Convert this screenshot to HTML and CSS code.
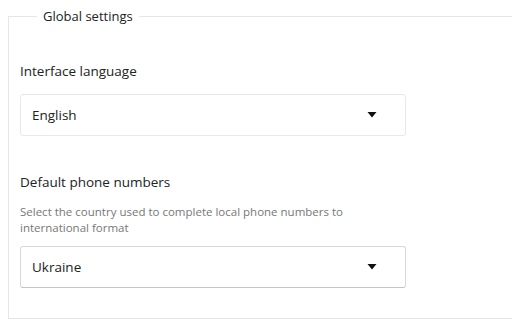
FILE: index.html
```html
<!DOCTYPE html>
<html>
<head>
<meta charset="utf-8">
<link rel="stylesheet" href="styles.css">
</head>
<body>
<fieldset class="group">
  <legend class="group-title">Global settings</legend>
  <div class="field">
    <div class="label">Interface language</div>
    <div class="select">
      <span class="value">English</span>
      <svg class="caret" width="10" height="6" viewBox="0 0 10 6"><path d="M0.5 0H9.5L5 5.5Z" fill="#111"/></svg>
    </div>
  </div>
  <div class="field second">
    <div class="label">Default phone numbers</div>
    <div class="hint">Select the country used to complete local phone numbers to international format</div>
    <div class="select dark">
      <span class="value">Ukraine</span>
      <svg class="caret" width="10" height="6" viewBox="0 0 10 6"><path d="M0.5 0H9.5L5 5.5Z" fill="#111"/></svg>
    </div>
  </div>
</fieldset>
</body>
</html>
```
FILE: styles.css
```css
html, body {
  margin: 0;
  padding: 0;
  background: #fff;
  overflow: hidden;
  width: 512px;
  height: 320px;
}
body {
  font-family: "Open Sans", "Noto Sans", sans-serif;
  color: #222;
}
.group {
  margin: 8px 0 0 8px;
  width: 504px;
  height: 311px;
  box-sizing: border-box;
  border: 1px solid #e6e6e6;
  border-right: none;
  padding: 0 0 0 11px;
}
.group-title {
  margin-left: 17px;
  padding: 0 6px;
  font-size: 13px;
  line-height: 16px;
  color: #222;
}
.field {
  width: 386px;
}
.label {
  font-size: 13.5px;
  line-height: 18px;
  margin-top: 38px;
}
.select {
  margin-top: 14px;
  height: 42px;
  box-sizing: border-box;
  border: 1px solid #e8e8e8;
  border-radius: 3px;
  display: flex;
  align-items: center;
  justify-content: space-between;
  padding: 0 28px 0 11px;
  font-size: 13.5px;
}
.select.dark {
  border-color: #d8d8d8;
  border-bottom-color: #c4c4c4;
  margin-top: 10px;
}
.second .label {
  margin-top: 37px;
}
.hint {
  margin-top: 13px;
  font-size: 11.5px;
  line-height: 16px;
  color: #777;
  width: 340px;
}
```
